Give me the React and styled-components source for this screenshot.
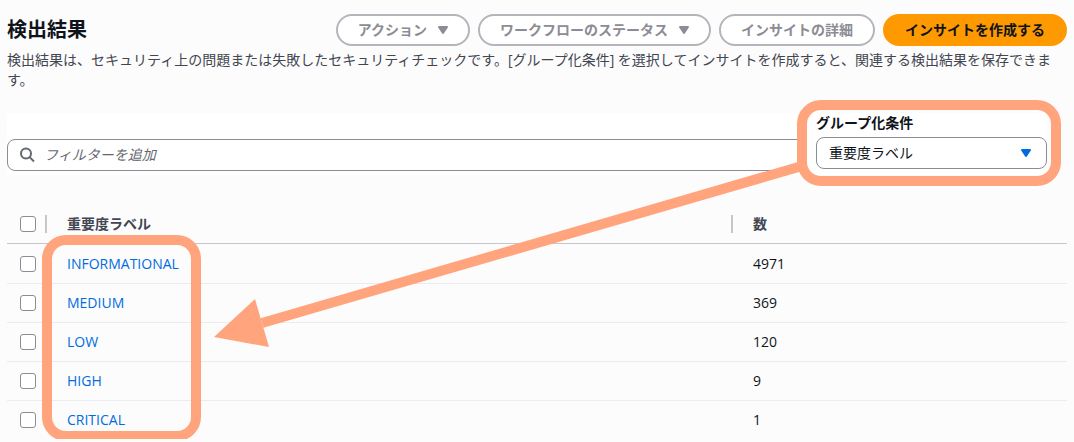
import React from "react";
import styled, { createGlobalStyle } from "styled-components";

const GlobalStyle = createGlobalStyle`
  *, *::before, *::after { box-sizing: border-box; }
  body {
    margin: 0;
    background: #fcfcfd;
    color: #0f141a;
    font-family: "Open Sans", "Noto Sans CJK JP", sans-serif;
    font-size: 14px;
    line-height: 20px;
  }
  button, input, select { font: inherit; color: inherit; }
`;

const Page = styled.main`
  position: relative;
  padding: 14px 7px 0;
`;

const Header = styled.header`
  display: flex;
  align-items: center;
  justify-content: space-between;
`;

const Title = styled.h1`
  margin: 0;
  font-size: 20px;
  line-height: 24px;
  font-weight: 700;
`;

const Actions = styled.div`
  display: flex;
  gap: 8px;
`;

const Button = styled.button`
  display: flex;
  align-items: center;
  gap: 8px;
  height: 32px;
  padding: 0 ${(p) => (p.$menu ? "17px" : "20px")} 0 20px;
  border: 2px solid ${(p) => (p.$primary ? "#ff9900" : "#b4b4bb")};
  border-radius: 20px;
  background: ${(p) => (p.$primary ? "#ff9900" : "#ffffff")};
  color: ${(p) => (p.$primary ? "#0f141a" : "#8c8c94")};
  font-weight: 700;
  white-space: nowrap;
`;

const Description = styled.p`
  margin: 4px 0 0;
  color: #424650;
`;

const FilterBar = styled.section`
  display: flex;
  align-items: flex-end;
  gap: 10px;
  margin: 23px 20px 0 0;
  padding-bottom: 4px;
  background: #ffffff;
`;

const SearchBox = styled.label`
  display: flex;
  flex: 1;
  align-items: center;
  gap: 8px;
  height: 32px;
  padding: 0 12px;
  border: 1px solid #8c8c94;
  border-radius: 8px;
  background: #ffffff;
  color: #656871;
`;

const SearchInput = styled.input`
  flex: 1;
  min-width: 0;
  padding: 0;
  border: 0;
  outline: 0;
  background: transparent;
  &::placeholder {
    color: #656871;
    font-style: italic;
    opacity: 1;
  }
`;

const GroupField = styled.div`
  position: relative;
  width: 231px;
  margin-bottom: 2px;
`;

const GroupLabel = styled.label`
  display: block;
  margin-bottom: 4px;
  font-weight: 700;
`;

const SelectBox = styled.div`
  display: grid;
  align-items: center;
  color: #006ce0;
  & > * { grid-area: 1 / 1; }
  & > svg {
    justify-self: end;
    margin-right: 13px;
    pointer-events: none;
  }
`;

const Select = styled.select`
  width: 100%;
  height: 32px;
  padding: 0 12px;
  border: 1px solid #8c8c94;
  border-radius: 8px;
  background: #ffffff;
  color: #0f141a;
  appearance: none;
`;

const Results = styled.section`
  position: relative;
  margin-top: 30px;
`;

const Table = styled.table`
  width: 100%;
  border-collapse: separate;
  border-spacing: 0;
  table-layout: fixed;
`;

const HeadCell = styled.th`
  width: ${(p) => p.$width || "auto"};
  height: 39px;
  padding: 0 0 0 ${(p) => (p.$tick ? "13px" : "20px")};
  border-bottom: 1px solid #c6c6cd;
  color: #424650;
  font-weight: 700;
  text-align: left;
`;

const HeadContent = styled.div`
  display: flex;
  align-items: center;
  justify-content: space-between;
`;

const Divider = styled.span`
  width: 2px;
  height: 18px;
  background: #c6c6cd;
`;

const Cell = styled.td`
  height: 39px;
  padding: 0 0 0 ${(p) => (p.$tick ? "13px" : "20px")};
  border-bottom: 1px solid #ebebf0;
  font-weight: 500;
  tr:first-child > & { height: 40px; }
  tr:last-child > & {
    height: 38px;
    border-bottom: 0;
  }
`;

const Checkbox = styled.input`
  display: block;
  width: 16px;
  height: 16px;
  margin: 0;
  border: 1px solid #8c8c94;
  border-radius: 3px;
  background: #ffffff;
  appearance: none;
  &:checked { background: #006ce0; }
`;

const SeverityLink = styled.a`
  color: #006ce0;
  text-decoration: none;
`;

const Highlight = styled.div`
  position: absolute;
  border: 10px solid #ffa47c;
  border-radius: 24px;
  pointer-events: none;
`;

const FieldHighlight = styled(Highlight)`
  inset: -13px -14px -17px -19px;
`;

const ColumnHighlight = styled(Highlight)`
  top: 30px;
  bottom: -2px;
  left: 35px;
  width: 159px;
`;

const Arrow = styled.svg`
  position: absolute;
  top: 160px;
  left: 214px;
  width: calc(100% - 484px);
  height: 190px;
  pointer-events: none;
`;

function Caret() {
  return (
    <svg width="16" height="16" viewBox="0 0 16 16" aria-hidden="true">
      <path
        d="M4 5h8l-4 6z"
        fill="currentColor"
        stroke="currentColor"
        strokeWidth="2"
        strokeLinejoin="round"
      />
    </svg>
  );
}

function SearchIcon() {
  return (
    <svg width="16" height="16" viewBox="0 0 16 16" fill="none" aria-hidden="true">
      <circle cx="6" cy="6.5" r="5" stroke="currentColor" strokeWidth="2" />
      <path d="M9.6 10.1 14 14.5" stroke="currentColor" strokeWidth="2" />
    </svg>
  );
}

const rows = [
  ["INFORMATIONAL", 4971],
  ["MEDIUM", 369],
  ["LOW", 120],
  ["HIGH", 9],
  ["CRITICAL", 1],
];

export default function App() {
  return (
    <Page lang="ja">
      <GlobalStyle />
      <Header>
        <Title>検出結果</Title>
        <Actions>
          <Button type="button" $menu>アクション<Caret /></Button>
          <Button type="button" $menu>ワークフローのステータス<Caret /></Button>
          <Button type="button">インサイトの詳細</Button>
          <Button type="button" $primary>インサイトを作成する</Button>
        </Actions>
      </Header>
      <Description>
        検出結果は、セキュリティ上の問題または失敗したセキュリティチェックです。[グループ化条件] を選択してインサイトを作成すると、関連する検出結果を保存できます。
      </Description>
      <FilterBar>
        <SearchBox>
          <SearchIcon />
          <SearchInput type="text" placeholder="フィルターを追加" aria-label="フィルターを追加" />
        </SearchBox>
        <GroupField>
          <GroupLabel htmlFor="group-by">グループ化条件</GroupLabel>
          <SelectBox>
            <Select id="group-by" defaultValue="severity">
              <option value="severity">重要度ラベル</option>
            </Select>
            <Caret />
          </SelectBox>
          <FieldHighlight />
        </GroupField>
      </FilterBar>
      <Results>
        <Table>
          <thead>
            <tr>
              <HeadCell $tick $width="40px">
                <HeadContent>
                  <Checkbox type="checkbox" aria-label="すべて選択" />
                  <Divider />
                </HeadContent>
              </HeadCell>
              <HeadCell scope="col">
                <HeadContent>重要度ラベル<Divider /></HeadContent>
              </HeadCell>
              <HeadCell scope="col" $width="31.5%">数</HeadCell>
            </tr>
          </thead>
          <tbody>
            {rows.map(([label, count]) => (
              <tr key={label}>
                <Cell $tick>
                  <Checkbox type="checkbox" aria-label={label} />
                </Cell>
                <Cell><SeverityLink href="#">{label}</SeverityLink></Cell>
                <Cell>{count}</Cell>
              </tr>
            ))}
          </tbody>
        </Table>
        <ColumnHighlight />
      </Results>
      <Arrow viewBox="0 0 590 190" preserveAspectRatio="none" aria-hidden="true">
        <path d="M48 163 588 6" fill="none" stroke="#ffa47c" strokeWidth="10" />
        <path d="M0 177 41 139 55 187z" fill="#ffa47c" />
      </Arrow>
    </Page>
  );
}
